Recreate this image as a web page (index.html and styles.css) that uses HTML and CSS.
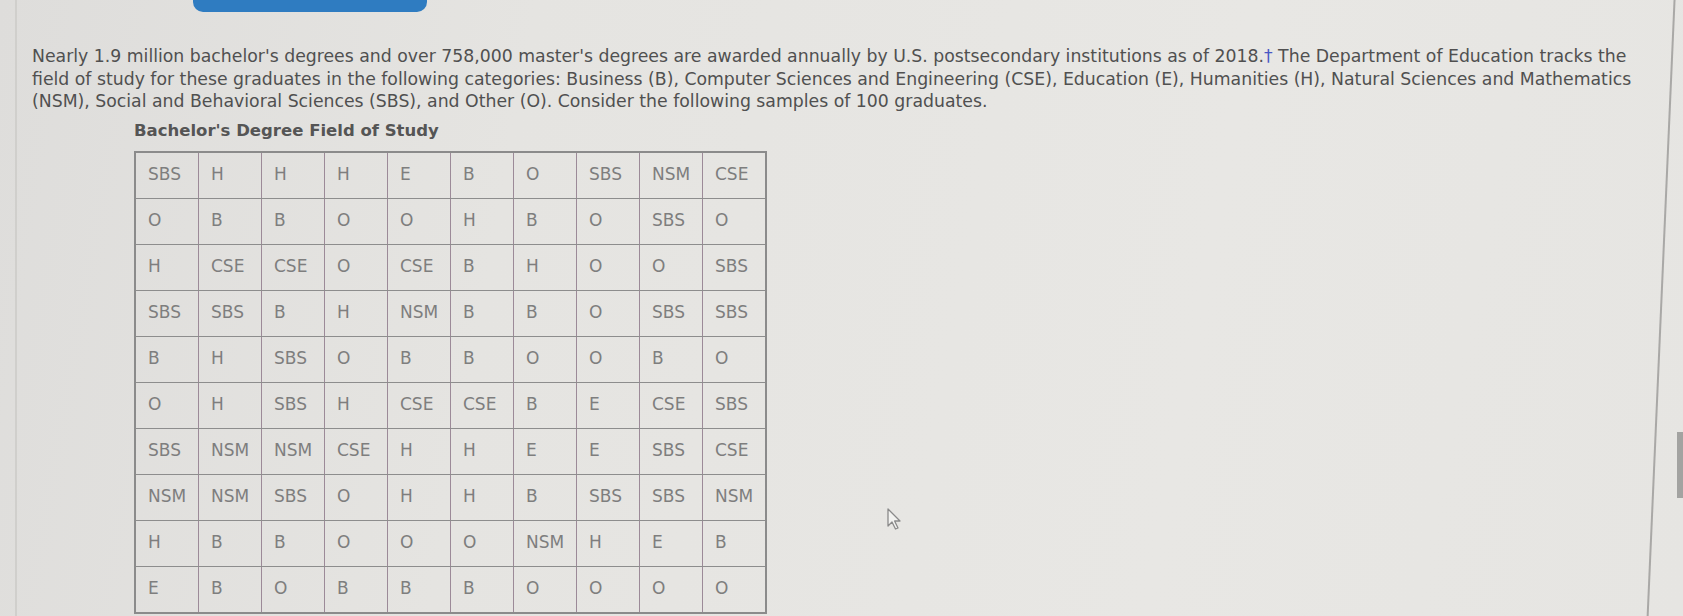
FILE: index.html
```html
<!DOCTYPE html>
<html>
<head>
<meta charset="utf-8">
<link rel="stylesheet" href="styles.css">
</head>
<body>
<div class="page">
  <div class="topbar"><div class="tab-button"></div></div>
  <div class="content">
    <p class="intro">Nearly 1.9 million bachelor's degrees and over 758,000 master's degrees are awarded annually by U.S. postsecondary institutions as of 2018.<span class="dagger">†</span> The Department of Education tracks the<br>field of study for these graduates in the following categories: Business (B), Computer Sciences and Engineering (CSE), Education (E), Humanities (H), Natural Sciences and Mathematics<br>(NSM), Social and Behavioral Sciences (SBS), and Other (O). Consider the following samples of 100 graduates.</p>
    <div class="table-block">
      <div class="caption">Bachelor's Degree Field of Study</div>
      <table class="grid">
        <tr><td>SBS</td><td>H</td><td>H</td><td>H</td><td>E</td><td>B</td><td>O</td><td>SBS</td><td>NSM</td><td>CSE</td></tr>
        <tr><td>O</td><td>B</td><td>B</td><td>O</td><td>O</td><td>H</td><td>B</td><td>O</td><td>SBS</td><td>O</td></tr>
        <tr><td>H</td><td>CSE</td><td>CSE</td><td>O</td><td>CSE</td><td>B</td><td>H</td><td>O</td><td>O</td><td>SBS</td></tr>
        <tr><td>SBS</td><td>SBS</td><td>B</td><td>H</td><td>NSM</td><td>B</td><td>B</td><td>O</td><td>SBS</td><td>SBS</td></tr>
        <tr><td>B</td><td>H</td><td>SBS</td><td>O</td><td>B</td><td>B</td><td>O</td><td>O</td><td>B</td><td>O</td></tr>
        <tr><td>O</td><td>H</td><td>SBS</td><td>H</td><td>CSE</td><td>CSE</td><td>B</td><td>E</td><td>CSE</td><td>SBS</td></tr>
        <tr><td>SBS</td><td>NSM</td><td>NSM</td><td>CSE</td><td>H</td><td>H</td><td>E</td><td>E</td><td>SBS</td><td>CSE</td></tr>
        <tr><td>NSM</td><td>NSM</td><td>SBS</td><td>O</td><td>H</td><td>H</td><td>B</td><td>SBS</td><td>SBS</td><td>NSM</td></tr>
        <tr><td>H</td><td>B</td><td>B</td><td>O</td><td>O</td><td>O</td><td>NSM</td><td>H</td><td>E</td><td>B</td></tr>
        <tr><td>E</td><td>B</td><td>O</td><td>B</td><td>B</td><td>B</td><td>O</td><td>O</td><td>O</td><td>O</td></tr>
      </table>
    </div>
  </div>
  <div class="edge-left"></div>
  <div class="edge-right"></div>
  <div class="scroll-thumb"></div>
  <svg class="cursor" width="20" height="26" viewBox="0 0 20 26">
    <path d="M2 2 L2 19 L6 15 L9.5 22 L12 21 L8.6 14 L14 14 Z" fill="#f2f2f0" stroke="#8a8a8a" stroke-width="1.3" stroke-linejoin="round"/>
  </svg>
</div>
</body>
</html>
```

FILE: styles.css
```css
html, body {
  margin: 0;
  padding: 0;
}
body {
  background: #e4e3e0;
  width: 1683px;
  height: 616px;
  overflow: hidden;
  font-family: "DejaVu Sans", Verdana, sans-serif;
}
.page {
  position: relative;
  width: 1683px;
  height: 616px;
  background: linear-gradient(100deg, #dedddb 0%, #e5e4e1 30%, #e8e7e4 70%, #e6e5e2 100%);
}
.topbar {
  height: 12px;
  padding-left: 193px;
}
.tab-button {
  width: 234px;
  height: 12px;
  background: #2f7cc1;
  border-radius: 0 0 10px 10px;
}
.content {
  padding: 33px 0 0 32px;
}
.intro {
  margin: 0;
  white-space: nowrap;
  font-size: 17.3px;
  line-height: 22.5px;
  color: #505050;
}
.dagger {
  color: #4a58c4;
}
.table-block {
  padding: 8px 0 0 102px;
}
.caption {
  font-weight: bold;
  font-size: 16.5px;
  color: #555;
  margin: 0 0 11px 0;
}
.grid {
  border-collapse: collapse;
  border: 2px solid #8b8b8b;
}
.grid td {
  width: 50px;
  height: 43px;
  padding: 0 0 2px 12px;
  border-top: 1.5px solid #8d8d8d;
  border-bottom: 1.5px solid #8d8d8d;
  border-left: 1.5px solid #9c8a98;
  border-right: 1.5px solid #9c8a98;
  font-size: 17px;
  color: #7e7e7e;
  vertical-align: middle;
  text-align: left;
}
.edge-left {
  position: absolute;
  left: 15px;
  top: 0;
  width: 2px;
  height: 616px;
  background: #d0cfcc;
}
.edge-right {
  position: absolute;
  left: 1660px;
  top: -10px;
  width: 2px;
  height: 640px;
  background: #a9a8a6;
  transform: rotate(2.5deg);
}
.scroll-thumb {
  position: absolute;
  left: 1677px;
  top: 432px;
  width: 6px;
  height: 66px;
  background: #a3a3a1;
}
.cursor {
  position: absolute;
  left: 886px;
  top: 507px;
}
```
